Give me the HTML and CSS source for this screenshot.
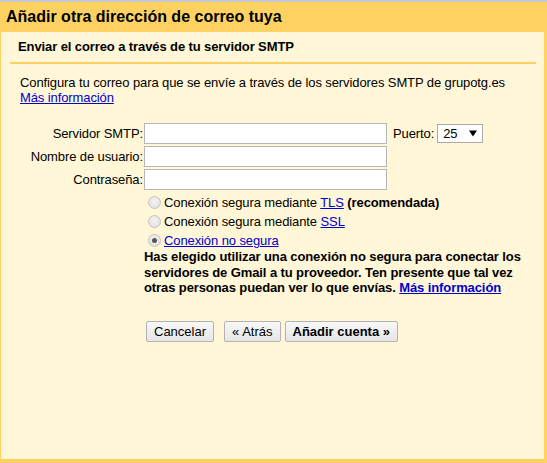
FILE: index.html
```html
<!DOCTYPE html>
<html lang="es">
<head>
<meta charset="utf-8">
<title>Añadir otra dirección de correo tuya</title>
<link rel="stylesheet" href="styles.css">
</head>
<body>
<div class="dialog">
  <div class="title">Añadir otra dirección de correo tuya</div>
  <div class="inner">
    <div class="subtitle">Enviar el correo a través de tu servidor SMTP</div>
    <div class="intro">
      Configura tu correo para que se envíe a través de los servidores SMTP de grupotg.es<br>
      <a href="#" class="link">Más información</a>
    </div>
    <div class="form">
      <label class="lbl">Servidor SMTP:</label>
      <span class="input"></span>
      <div class="port">
        <span class="port-lbl">Puerto:</span>
        <span class="select"><span class="sel-val">25</span><svg class="arrow" width="8" height="7" viewBox="0 0 8 7"><path d="M0 0.5h8L4 6.5z" fill="#000"/></svg></span>
      </div>
      <label class="lbl">Nombre de usuario:</label>
      <span class="input"></span>
      <span></span>
      <label class="lbl">Contraseña:</label>
      <span class="input"></span>
      <span></span>
      <span></span>
      <div class="options">
        <div class="opt"><span class="radio"></span><span>Conexión segura mediante <a href="#" class="link">TLS</a> <b>(recomendada)</b></span></div>
        <div class="opt"><span class="radio"></span><span>Conexión segura mediante <a href="#" class="link">SSL</a></span></div>
        <div class="opt"><span class="radio checked"></span><a href="#" class="link">Conexión no segura</a></div>
        <p class="warn">Has elegido utilizar una conexión no segura para conectar los servidores de Gmail a tu proveedor. Ten presente que tal vez otras personas puedan ver lo que envías. <a href="#" class="link">Más información</a></p>
        <div class="buttons">
          <button class="btn">Cancelar</button>
          <button class="btn back">« Atrás</button>
          <button class="btn primary">Añadir cuenta »</button>
        </div>
      </div>
    </div>
  </div>
</div>
</body>
</html>
```
FILE: styles.css
```css
html, body {
  margin: 0;
  padding: 0;
  height: 100%;
  background: #fff;
}
body {
  font-family: "Liberation Sans", Arial, sans-serif;
  font-size: 13px;
  letter-spacing: -0.1px;
  color: #000;
}
.dialog {
  box-sizing: border-box;
  height: 463px;
  border-top: 2px solid #c8c8ce;
  background: #fdd262;
  padding: 0 3px 4px 1px;
  display: flex;
  flex-direction: column;
}
.title {
  height: 30px;
  line-height: 30px;
  padding-left: 5px;
  font-size: 16px;
  font-weight: bold;
  letter-spacing: 0;
  flex: none;
}
.inner {
  flex: 1;
  background: #fff7d7;
}
.subtitle {
  margin: 0 8px 0 9px;
  padding: 7px 8px 7px;
  line-height: 16px;
  font-weight: bold;
  border-bottom: 2px solid #fdd262;
}
.intro {
  margin-top: 11px;
  padding-left: 19px;
  line-height: 15px;
}
.link {
  color: #0000cc;
  text-decoration: underline;
}
.form {
  margin-top: 18px;
  margin-left: 9px;
  display: grid;
  grid-template-columns: 133px 243px auto;
  column-gap: 1px;
  row-gap: 2px;
  align-items: center;
}
.lbl {
  text-align: right;
  line-height: 21px;
}
.input {
  display: block;
  height: 19px;
  background: #fff;
  border: 1px solid #b6b6b6;
}
.port {
  display: flex;
  align-items: center;
  padding-left: 5px;
}
.port-lbl {
  margin-right: 3px;
}
.select {
  box-sizing: border-box;
  width: 46px;
  height: 19px;
  background: #fff;
  border: 1px solid #a9a9a9;
  display: flex;
  align-items: center;
  justify-content: space-between;
  padding: 0 5px 0 5px;
}
.sel-val {
  font-size: 13px;
}
.options {
  grid-column: 2 / 4;
  margin-top: 1px;
}
.opt {
  display: flex;
  align-items: center;
  height: 19px;
  padding-left: 4px;
}
.radio {
  box-sizing: border-box;
  width: 13px;
  height: 13px;
  border-radius: 50%;
  border: 1px solid #c4c4c4;
  background: radial-gradient(circle at 50% 40%, #f4f4f4 0%, #dcdcdc 100%);
  margin-right: 3px;
  flex: none;
  position: relative;
}
.radio.checked::after {
  content: "";
  position: absolute;
  left: 3px;
  top: 3px;
  width: 5px;
  height: 5px;
  border-radius: 50%;
  background: #555;
}
.warn {
  margin: -1px 0 0 0;
  width: 385px;
  line-height: 15.5px;
  font-weight: bold;
}
.buttons {
  margin-top: 25px;
  padding-left: 2px;
  display: flex;
}
.btn {
  font-family: "Liberation Sans", Arial, sans-serif;
  font-size: 13px;
  color: #000;
  height: 21px;
  padding: 0 7px;
  border: 1px solid #b3b3b3;
  border-radius: 2px;
  background: linear-gradient(#f8f8f8, #e6e6e6);
  line-height: 19px;
}
.btn.back {
  margin-left: 10px;
}
.btn.primary {
  margin-left: 4px;
  font-weight: bold;
}
```
